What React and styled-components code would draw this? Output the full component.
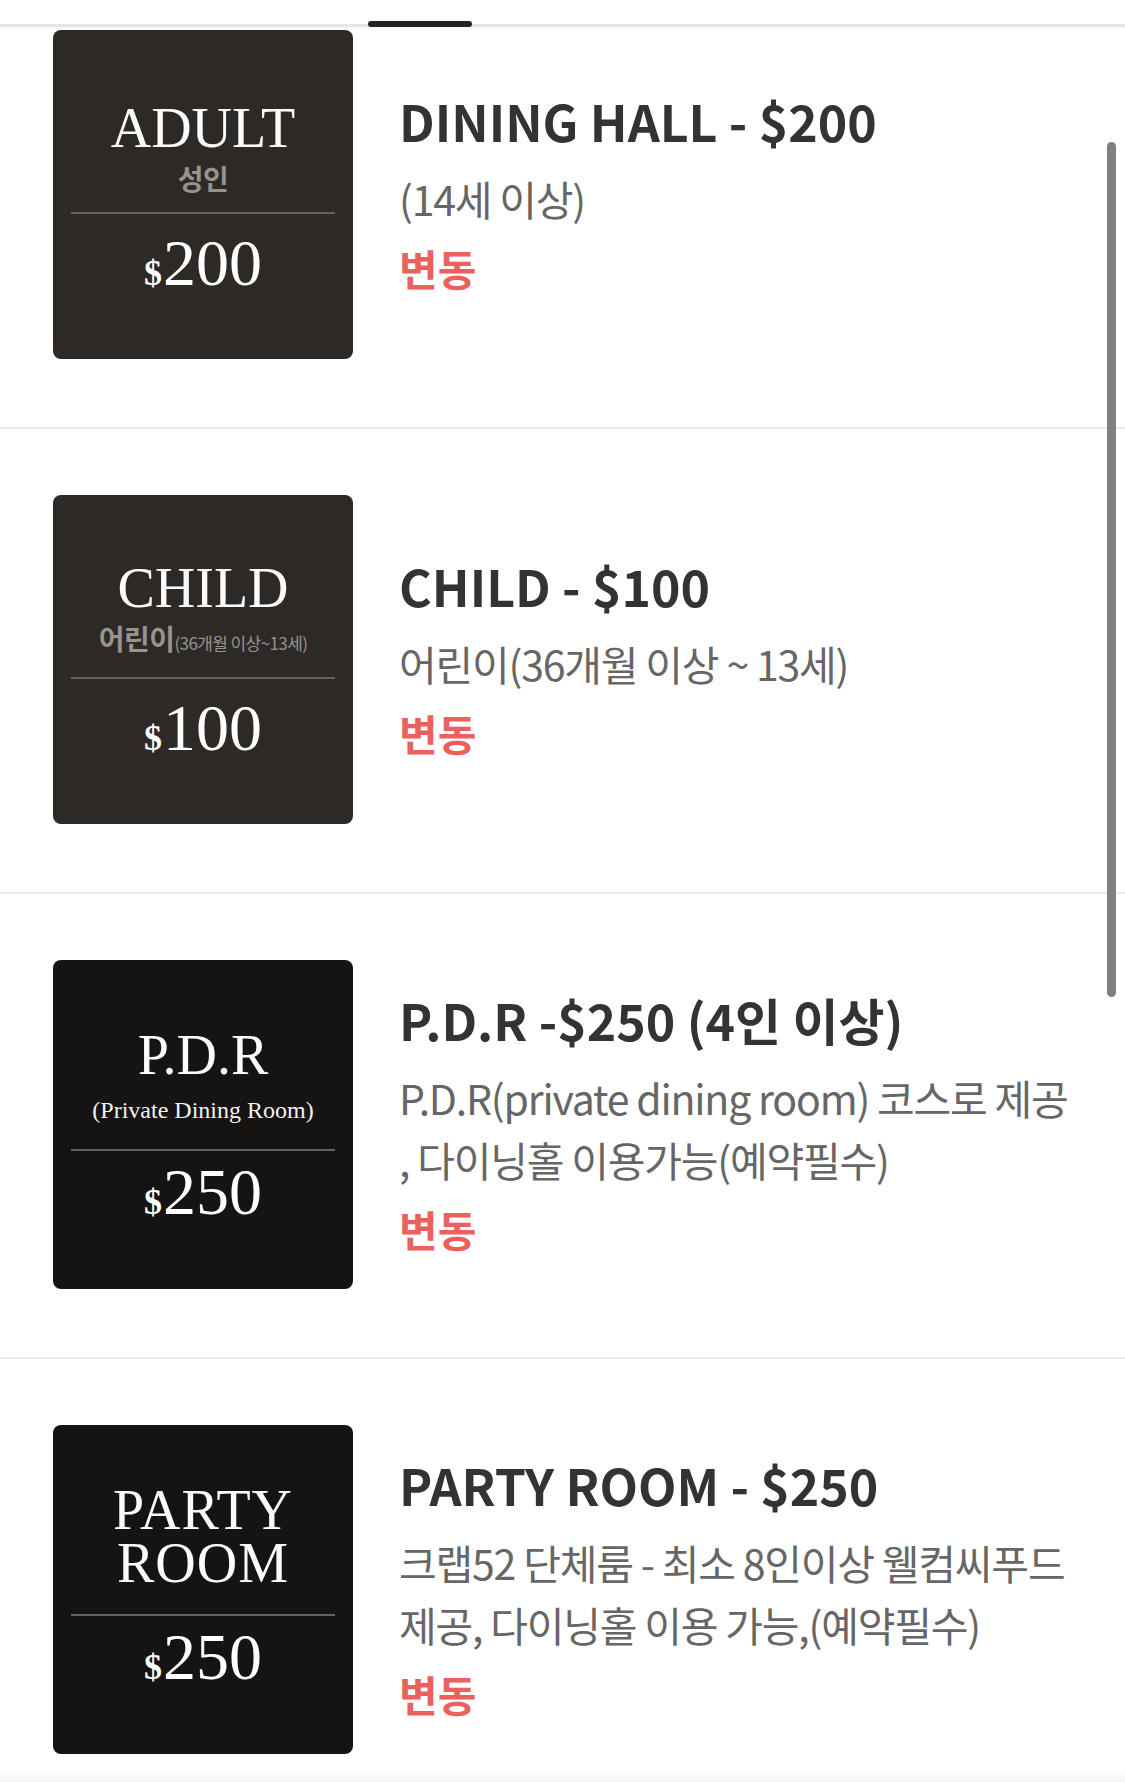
import React from "react";
import styled, { createGlobalStyle } from "styled-components";

const GlobalStyle = createGlobalStyle`
  html, body {
    margin: 0;
    padding: 0;
    background: #fff;
  }
  body {
    font-family: "Noto Sans CJK KR", "Noto Sans", sans-serif;
  }
`;

const Screen = styled.div`
  position: relative;
  width: 1125px;
  height: 1782px;
  overflow: hidden;
  background: #fff;
`;

const TabBar = styled.div`
  position: relative;
  height: 24px;
  border-bottom: 3px solid #e4e4e9;
  box-shadow: 0 2px 3px rgba(0, 0, 0, 0.03);
`;

const TabIndicator = styled.div`
  position: absolute;
  left: 368px;
  bottom: -3px;
  width: 104px;
  height: 6px;
  border-radius: 3px;
  background: #222;
`;

const List = styled.div`
  display: flex;
  flex-direction: column;
`;

const Row = styled.div`
  display: flex;
  align-items: center;
  gap: 46px;
  padding: 66px 53px 68px;
  border-bottom: 2px solid #ececec;

  &:first-child {
    padding-top: 3px;
  }
`;

const Card = styled.div`
  flex: none;
  width: 300px;
  height: 329px;
  box-sizing: border-box;
  padding: 0 18px;
  border-radius: 8px;
  background: ${(p) => (p.$tone === "black" ? "#161412" : "#2d2926")};
  display: flex;
  flex-direction: column;
  color: #fff;
`;

const CardHead = styled.div`
  height: ${(p) => (p.$tone === "black" ? 189 : 182)}px;
  box-sizing: border-box;
  padding-bottom: ${(p) => (p.$tone === "black" ? 24 : 17)}px;
  display: flex;
  flex-direction: column;
  justify-content: flex-end;
  align-items: center;
  gap: ${(p) => (p.$tone === "black" ? 12 : 5)}px;
`;

const Label = styled.div`
  font-family: "Liberation Serif", "Times New Roman", serif;
  font-size: 56px;
  line-height: ${(p) => (p.$tight ? 53 : 56)}px;
  letter-spacing: ${(p) => (p.$tight ? 1 : 0)}px;
  text-align: center;
  color: #fbfbfb;
`;

const KoSub = styled.div`
  font-family: "Noto Sans CJK KR", sans-serif;
  font-size: 28px;
  line-height: 34px;
  font-weight: 700;
  color: #97938f;
  white-space: nowrap;
  letter-spacing: -0.5px;
`;

const KoSmall = styled.span`
  font-size: 17px;
  font-weight: 400;
  letter-spacing: -0.6px;
`;

const SerifSub = styled.div`
  font-family: "Liberation Serif", "Times New Roman", serif;
  font-size: 24px;
  line-height: 30px;
  color: #f2f2f2;
  white-space: nowrap;
`;

const Rule = styled.div`
  height: 2px;
  background: #65615d;
`;

const Price = styled.div`
  padding-top: ${(p) => (p.$tone === "black" ? 8 : 16)}px;
  display: flex;
  justify-content: center;
  align-items: baseline;
  font-family: "Liberation Serif", "Times New Roman", serif;
  line-height: 66px;
  color: #fff;
`;

const Dollar = styled.span`
  font-size: 36px;
  font-weight: 700;
  margin-right: 1px;
`;

const Amount = styled.span`
  font-size: 66px;
`;

const Info = styled.div`
  flex: 1;
  min-width: 0;
  font-family: "Noto Sans CJK KR", "Noto Sans", sans-serif;
`;

const Title = styled.div`
  font-size: 50px;
  line-height: 60px;
  font-weight: 700;
  color: #333;
  white-space: nowrap;
`;

const Desc = styled.div`
  margin-top: 17px;
  font-size: 41px;
  line-height: 62px;
  letter-spacing: -1.2px;
  color: #666;
`;

const DescLine = styled.div`
  white-space: nowrap;
`;

const Tag = styled.div`
  margin-top: 8px;
  font-size: 42px;
  line-height: 62px;
  font-weight: 700;
  color: #ec615d;
`;

const Scrollbar = styled.div`
  position: absolute;
  left: 1107px;
  top: 142px;
  width: 9px;
  height: 855px;
  border-radius: 5px;
  background: #808080;
`;

const BottomFade = styled.div`
  position: absolute;
  left: 0;
  right: 0;
  bottom: 0;
  height: 12px;
  background: linear-gradient(#fff, #f5f5f5);
`;

const menus = [
  {
    tone: "brown",
    label: "ADULT",
    sub: <KoSub>성인</KoSub>,
    amount: "200",
    title: "DINING HALL - $200",
    desc: ["(14세 이상)"],
  },
  {
    tone: "brown",
    label: "CHILD",
    sub: (
      <KoSub>
        어린이<KoSmall>(36개월 이상~13세)</KoSmall>
      </KoSub>
    ),
    amount: "100",
    title: "CHILD - $100",
    desc: ["어린이(36개월 이상 ~ 13세)"],
  },
  {
    tone: "black",
    label: "P.D.R",
    sub: <SerifSub>(Private Dining Room)</SerifSub>,
    amount: "250",
    title: "P.D.R -$250 (4인 이상)",
    desc: ["P.D.R(private dining room) 코스로 제공", ", 다이닝홀 이용가능(예약필수)"],
  },
  {
    tone: "black",
    label: (
      <>
        PARTY
        <br />
        ROOM
      </>
    ),
    tight: true,
    amount: "250",
    title: "PARTY ROOM - $250",
    desc: ["크랩52 단체룸 - 최소 8인이상 웰컴씨푸드", "제공, 다이닝홀 이용 가능,(예약필수)"],
  },
];

function MenuRow({ item }) {
  return (
    <Row>
      <Card $tone={item.tone}>
        <CardHead $tone={item.tone}>
          <Label $tight={item.tight}>{item.label}</Label>
          {item.sub}
        </CardHead>
        <Rule />
        <Price $tone={item.tone}>
          <Dollar>$</Dollar>
          <Amount>{item.amount}</Amount>
        </Price>
      </Card>
      <Info>
        <Title>{item.title}</Title>
        <Desc>
          {item.desc.map((line, i) => (
            <DescLine key={i}>{line}</DescLine>
          ))}
        </Desc>
        <Tag>변동</Tag>
      </Info>
    </Row>
  );
}

export default function App() {
  return (
    <Screen>
      <GlobalStyle />
      <TabBar>
        <TabIndicator />
      </TabBar>
      <List>
        {menus.map((item, i) => (
          <MenuRow key={i} item={item} />
        ))}
      </List>
      <Scrollbar />
      <BottomFade />
    </Screen>
  );
}
